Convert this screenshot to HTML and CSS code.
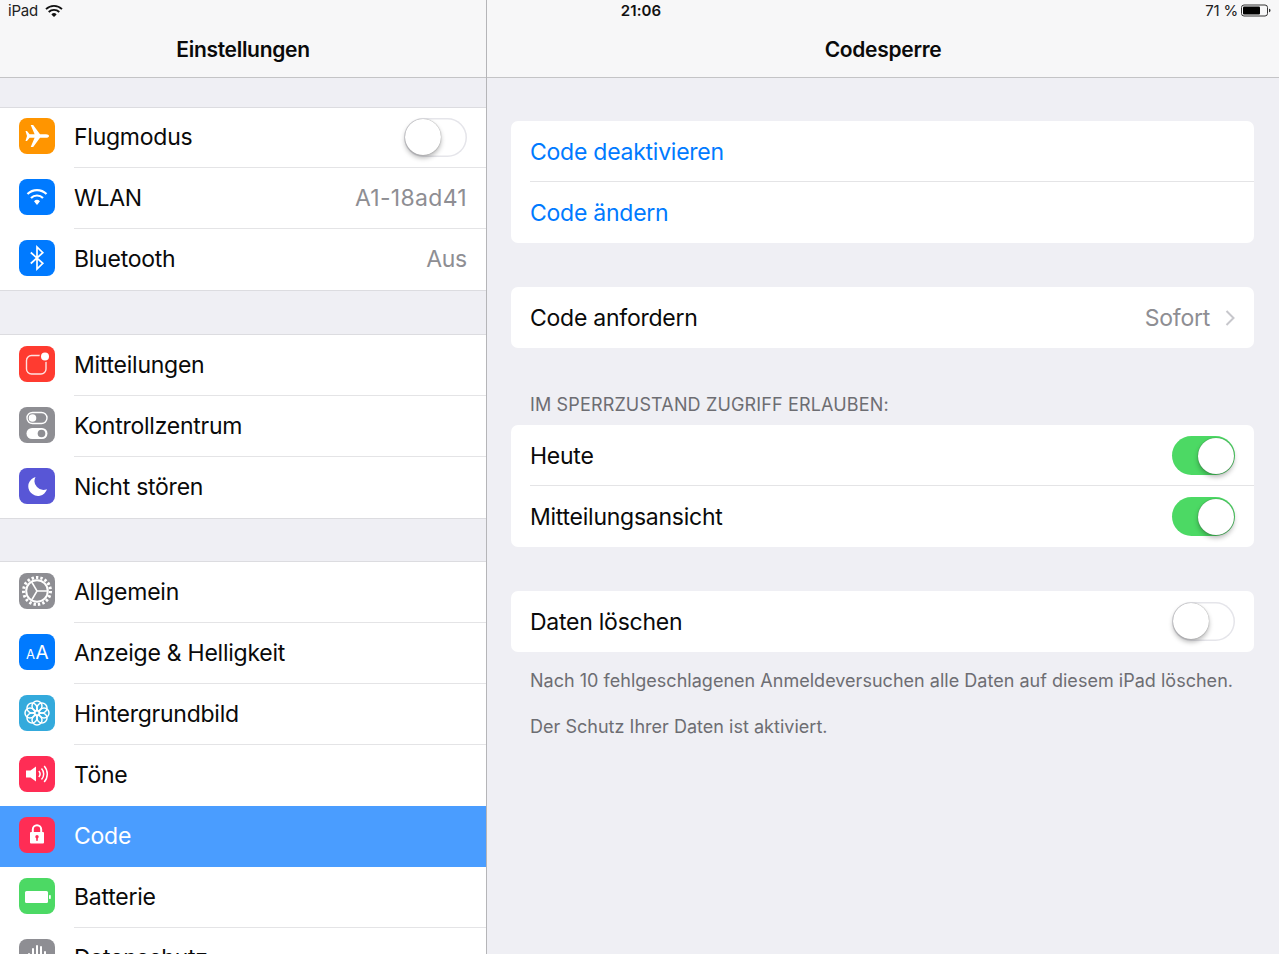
FILE: index.html
```html
<!DOCTYPE html>
<html lang="de">
<head>
<meta charset="utf-8">
<title>Codesperre</title>
<link rel="stylesheet" href="styles.css">
</head>
<body>
<div class="screen">
  <span class="clock">21:06</span>
  <aside class="master">
    <header class="nav">
      <div class="status">
        <span>iPad</span>
        <svg class="status-wifi" viewBox="0 0 18 14"><path d="M1 5.2a11.3 11.3 0 0 1 16 0M3.7 8a7.5 7.5 0 0 1 10.6 0" fill="none" stroke="#111" stroke-width="1.8"/><path d="M6.4 10.4a3.7 3.7 0 0 1 5.2 0L9 13z" fill="#111"/></svg>
      </div>
      <h1 class="nav-title">Einstellungen</h1>
    </header>
    <div class="list">
      <section class="group">
        <div class="row">
          <span class="icon orange"><svg viewBox="0 0 36 36"><path fill="#fff" d="M30 18c0-1-1.200-1.800-3-1.800h-6L14.200 7h-2.500l3.900 9.200h-5L8 13H6.500L8 18l-1.500 5H8l2.600-3.200h5l-3.900 9.200h2.500L21 19.800h6c1.800 0 3-.8 3-1.800z"/></svg></span>
          <span class="label">Flugmodus</span>
          <span class="toggle"></span>
        </div>
        <div class="row">
          <span class="icon blue"><svg viewBox="0 0 36 36"><g fill="none" stroke="#fff" stroke-width="2.200"><path d="M8.500 15a13.500 13.500 0 0 1 19 0"/><path d="M12 19a8.500 8.500 0 0 1 12 0"/></g><path fill="#fff" d="M15 22.300a4.300 4.300 0 0 1 6 0L18 26z"/></svg></span>
          <span class="label">WLAN</span>
          <span class="value spaced">A1-18ad41</span>
        </div>
        <div class="row">
          <span class="icon blue"><svg viewBox="0 0 36 36"><path fill="none" stroke="#fff" stroke-width="1.700" d="M11.800 12.500 23.800 23.300 18 29V7l5.800 5.700-12 10.800"/></svg></span>
          <span class="label">Bluetooth</span>
          <span class="value">Aus</span>
        </div>
      </section>
      <section class="group">
        <div class="row">
          <span class="icon red"><svg viewBox="0 0 36 36"><rect x="7.500" y="9.500" width="19.500" height="18.500" rx="5" fill="none" stroke="#fff" stroke-opacity=".85" stroke-width="1.400"/><circle cx="26" cy="10.500" r="5.500" fill="#ff3b30"/><circle cx="26" cy="10.500" r="4" fill="#fff"/></svg></span>
          <span class="label">Mitteilungen</span>
        </div>
        <div class="row">
          <span class="icon gray"><svg viewBox="0 0 36 36"><rect x="8" y="5.500" width="20" height="11" rx="5.500" fill="none" stroke="#fff" stroke-width="1.400"/><circle cx="13.500" cy="11" r="3.800" fill="#fff"/><rect x="7.500" y="21" width="21" height="11" rx="5.500" fill="#fff"/><circle cx="22.500" cy="26.500" r="3.800" fill="#8e8e93"/></svg></span>
          <span class="label">Kontrollzentrum</span>
        </div>
        <div class="row">
          <span class="icon purple"><svg viewBox="0 0 36 36"><path fill="#fff" d="M16.500 9A9.600 9.600 0 1 0 28 21.300 9 9 0 0 1 16.500 9z"/></svg></span>
          <span class="label">Nicht stören</span>
        </div>
      </section>
      <section class="group">
        <div class="row">
          <span class="icon gray"><svg viewBox="0 0 36 36"><g fill="none" stroke="#fff"><circle cx="18" cy="18" r="13.500" stroke-width="3" stroke-dasharray="2.400 2.040"/><circle cx="18" cy="18" r="10.800" stroke-width="2"/><path stroke-width="1.500" d="M18 18h10M18 18 13 9.500M18 18l-5 8.500"/></g></svg></span>
          <span class="label">Allgemein</span>
        </div>
        <div class="row">
          <span class="icon blue"><svg viewBox="0 0 36 36"><text class="aa-small" x="7" y="24.500">A</text><text class="aa-big" x="16.500" y="24.500">A</text></svg></span>
          <span class="label">Anzeige &amp; Helligkeit</span>
        </div>
        <div class="row">
          <span class="icon teal"><svg viewBox="0 0 36 36"><g fill="none" stroke="#fff" stroke-width="1.500"><circle cx="18" cy="11" r="5"/><circle cx="18" cy="25" r="5"/><circle cx="11" cy="18" r="5"/><circle cx="25" cy="18" r="5"/><circle cx="13" cy="13" r="5"/><circle cx="23" cy="13" r="5"/><circle cx="13" cy="23" r="5"/><circle cx="23" cy="23" r="5"/></g></svg></span>
          <span class="label">Hintergrundbild</span>
        </div>
        <div class="row">
          <span class="icon pink"><svg viewBox="0 0 36 36"><path fill="#fff" d="M7 14.500h4.500L17 10.500v15l-5.500-4H7z"/><g fill="none" stroke="#fff" stroke-width="1.500"><path d="M19.800 15a4.500 4.500 0 0 1 0 6"/><path d="M22.500 12.500a8 8 0 0 1 0 11"/><path d="M25.200 10a12 12 0 0 1 0 16"/></g></svg></span>
          <span class="label">Töne</span>
        </div>
        <div class="row selected">
          <span class="icon pink"><svg viewBox="0 0 36 36"><path fill="none" stroke="#fff" stroke-width="2" d="M13.800 16v-3.500a4.200 4.200 0 0 1 8.400 0V16"/><rect x="11" y="15" width="14" height="11.500" rx="1" fill="#fff"/><circle cx="18" cy="19.800" r="1.700" fill="#ff2d55"/><rect x="17.200" y="20" width="1.600" height="3.800" fill="#ff2d55"/></svg></span>
          <span class="label">Code</span>
        </div>
        <div class="row">
          <span class="icon green"><svg viewBox="0 0 36 36"><rect x="6" y="13" width="23" height="12" rx="1.500" fill="#fff"/><rect x="30" y="17" width="1.800" height="4" rx=".8" fill="#fff"/></svg></span>
          <span class="label">Batterie</span>
        </div>
        <div class="row">
          <span class="icon gray"><svg viewBox="0 0 36 36"><g stroke="#fff" stroke-width="2" stroke-linecap="round"><path d="M10 15v8M14 10v16M18 7v22M22 8v18M26 13v10"/></g></svg></span>
          <span class="label">Datenschutz</span>
        </div>
      </section>
    </div>
  </aside>
  <main class="detail">
    <header class="nav">
      <div class="status status-right">
        <span>71 %</span>
        <svg class="status-battery" viewBox="0 0 30 13"><rect x=".5" y="1" width="26" height="11" rx="2.500" fill="none" stroke="#333"/><rect x="2" y="2.500" width="17" height="8" rx="1" fill="#000"/><path d="M28 4.800c1 .2 1.500.8 1.500 1.700s-.5 1.500-1.500 1.700z" fill="#333"/></svg>
      </div>
      <h1 class="nav-title">Codesperre</h1>
    </header>
    <div class="content">
      <section class="card first">
        <div class="cell link">Code deaktivieren</div>
        <div class="cell link">Code ändern</div>
      </section>
      <section class="card">
        <div class="cell">
          <span class="label">Code anfordern</span>
          <span class="value">Sofort</span>
          <svg class="chevron" viewBox="0 0 10 16"><path d="M1.500 1 8.500 8l-7 7" fill="none" stroke="#c7c7cc" stroke-width="2"/></svg>
        </div>
      </section>
      <h2 class="caption">IM SPERRZUSTAND ZUGRIFF ERLAUBEN:</h2>
      <section class="card">
        <div class="cell"><span class="label">Heute</span><span class="toggle on"></span></div>
        <div class="cell"><span class="label">Mitteilungsansicht</span><span class="toggle on"></span></div>
      </section>
      <section class="card">
        <div class="cell"><span class="label">Daten löschen</span><span class="toggle"></span></div>
      </section>
      <p class="note note-first">Nach 10 fehlgeschlagenen Anmeldeversuchen alle Daten auf diesem iPad löschen.</p>
      <p class="note">Der Schutz Ihrer Daten ist aktiviert.</p>
    </div>
  </main>
</div>
</body>
</html>
```

FILE: styles.css
```css
* { box-sizing: border-box; }
html, body { margin: 0; height: 100%; overflow: hidden; }
body {
  font-family: Inter, "Liberation Sans", sans-serif;
  color: #0a0a0a;
  background: #efeff4;
}
.screen {
  position: relative;
  display: grid;
  grid-template-columns: 487px 1fr;
  height: 954px;
  overflow: hidden;
}
.clock {
  position: absolute;
  top: 1px;
  left: 3px;
  right: 0;
  text-align: center;
  font-size: 15px;
  line-height: 20px;
  font-weight: 600;
  letter-spacing: .1px;
  color: #111;
}
.master { border-right: 1px solid #b5b5b8; min-width: 0; }
.nav {
  height: 78px;
  background: #f7f7f8;
  border-bottom: 1px solid #c4c4c6;
}
.status {
  display: flex;
  align-items: center;
  gap: 7px;
  height: 21px;
  padding: 0 8px;
  font-size: 15px;
  letter-spacing: -.2px;
  color: #222;
}
.status-right { justify-content: flex-end; gap: 3px; }
.status-wifi { width: 18px; height: 14px; }
.status-battery { width: 30px; height: 13px; }
.nav-title {
  margin: 0;
  padding-top: 7px;
  text-align: center;
  font-size: 21px;
  line-height: 44px;
  font-weight: 600;
  letter-spacing: -.3px;
}
.list { padding-top: 28.5px; }
.group {
  margin-bottom: 42.65px;
  background: #fff;
  border-top: 1px solid #dcdce0;
  border-bottom: 1px solid #dcdce0;
}
.row {
  position: relative;
  display: flex;
  align-items: center;
  height: 60.95px;
  padding: 0 19px 1px;
  font-size: 23px;
}
.row + .row::before {
  content: "";
  position: absolute;
  top: -1px;
  left: 74px;
  right: 0;
  border-top: 1px solid #e4e4e6;
}
.row.selected { background: #4a9dff; color: #fff; }
.row.selected::before, .row.selected + .row::before { display: none; }
.icon {
  flex: none;
  width: 36px;
  height: 36px;
  margin-right: 19px;
  margin-bottom: 2px;
  border-radius: 8px;
  overflow: hidden;
}
.icon svg { display: block; width: 36px; height: 36px; }
.orange { background: #ff9500; }
.blue { background: #007aff; }
.red { background: #ff3b30; }
.gray { background: #8e8e93; }
.purple { background: #5856d6; }
.teal { background: #34aadc; }
.pink { background: #ff2d55; }
.green { background: #4cd964; }
.aa-small { font-size: 13px; fill: #fff; }
.aa-big { font-size: 19px; fill: #fff; }
.label { flex: 1; letter-spacing: -.25px; }
.value { color: #8e8e93; font-size: 23px; letter-spacing: -.25px; }
.value.spaced { letter-spacing: .3px; }
.content { padding: 43px 25px 0 24px; }
.card {
  margin-bottom: 44px;
  background: #fff;
  border-radius: 7px;
  overflow: hidden;
}
.cell {
  position: relative;
  display: flex;
  align-items: center;
  height: 61px;
  padding: 0 19px;
  font-size: 23px;
  letter-spacing: -.25px;
}
.cell + .cell::before {
  content: "";
  position: absolute;
  top: -1px;
  left: 19px;
  right: 0;
  border-top: 1px solid #e4e4e6;
}
.link { color: #007aff; }
.chevron { flex: none; width: 10px; height: 16px; margin-left: 15px; }
.caption {
  margin: -4px 0 0;
  padding: 0 19px 10px;
  height: 37px;
  display: flex;
  align-items: flex-end;
  font-size: 18px;
  line-height: 20px;
  font-weight: 400;
  letter-spacing: .15px;
  color: #6d6d72;
}
.note {
  margin: 0;
  padding: 0 19px;
  font-size: 18px;
  line-height: 45.5px;
  letter-spacing: .02px;
  color: #6d6d72;
}
.note-first { margin-top: -38px; }
.toggle {
  position: relative;
  flex: none;
  width: 63px;
  height: 39px;
  border-radius: 20px;
  background: #fff;
  box-shadow: inset 0 0 0 1.500px #e5e5ea;
}
.toggle::after {
  content: "";
  position: absolute;
  top: 1px;
  left: 1px;
  width: 36px;
  height: 36px;
  border-radius: 50%;
  background: #fff;
  box-shadow: 0 3px 5px rgba(0, 0, 0, .28), 0 0 1px rgba(0, 0, 0, .5);
}
.toggle.on { background: #4cd964; box-shadow: none; }
.toggle.on::after { left: 26px; top: 2px; }
```
